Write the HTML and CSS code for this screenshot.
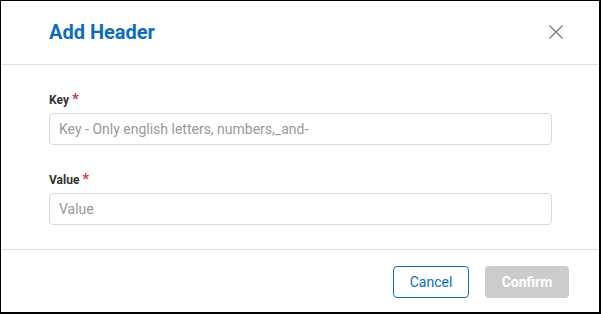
FILE: index.html
```html
<!DOCTYPE html>
<html lang="en">
<head>
    <meta charset="UTF-8">
    <meta name="viewport" content="width=device-width, initial-scale=1.0">
    <title>Add Header</title>
    <link rel="stylesheet" href="styles.css">
</head>
<body>
    <div class="dialog">
        <div class="dialog-header">
            <h1>Add Header</h1>
            <button class="close-btn" aria-label="Close">
                <svg width="14" height="14" viewBox="0 0 14 14">
                    <path d="M0.5 0.5 L13.5 13.5 M13.5 0.5 L0.5 13.5" stroke="#777" stroke-width="1.2" fill="none"/>
                </svg>
            </button>
        </div>

        <div class="dialog-body">
            <div class="form-group">
                <label for="key">Key <span class="required">*</span></label>
                <input type="text" id="key" placeholder="Key - Only english letters, numbers,_and-">
            </div>
            <div class="form-group">
                <label for="value">Value <span class="required">*</span></label>
                <input type="text" id="value" placeholder="Value">
            </div>
        </div>

        <div class="dialog-footer">
            <button class="btn btn-outline">Cancel</button>
            <button class="btn btn-disabled" disabled>Confirm</button>
        </div>
    </div>
</body>
</html>
```

FILE: styles.css
```css
body {
    margin: 0;
    font-family: Roboto, "Liberation Sans", Arial, sans-serif;
    background: white;
}

.dialog {
    width: 601px;
    height: 314px;
    box-sizing: border-box;
    border: 1px solid #000;
    border-right-width: 2px;
    border-bottom-width: 2px;
    background: white;
    display: flex;
    flex-direction: column;
}

.dialog-header {
    flex-shrink: 0;
    height: 63px;
    display: flex;
    align-items: center;
    justify-content: space-between;
    padding: 0 36px 0 48px;
    border-bottom: 1px solid #e0e0e0;
}

.dialog-header h1 {
    margin: 0;
    font-size: 20px;
    font-weight: bold;
    color: #0e6cbd;
    padding-bottom: 2px;
}

.close-btn {
    background: none;
    border: none;
    padding: 0;
    width: 14px;
    height: 14px;
    cursor: pointer;
    display: flex;
    margin-bottom: 1px;
}

.dialog-body {
    flex: 1;
    min-height: 0;
    display: flex;
    flex-direction: column;
    gap: 28px;
    padding: 28px 47px 0 48px;
    border-bottom: 1px solid #e0e0e0;
}

.form-group label {
    display: block;
    font-size: 12px;
    font-weight: bold;
    color: #333;
    margin-bottom: 6px;
    line-height: 14px;
}

.required {
    color: #d6393b;
    font-size: 15px;
    line-height: 12px;
}

.form-group input {
    width: 100%;
    height: 32px;
    box-sizing: border-box;
    border: 1px solid #d9d9d9;
    border-radius: 4px;
    padding: 0 9px;
    font-family: Roboto, "Liberation Sans", Arial, sans-serif;
    font-size: 14px;
    color: #333;
    outline: none;
}

.form-group input::placeholder {
    color: #999;
}

.dialog-footer {
    flex-shrink: 0;
    height: 62px;
    box-sizing: border-box;
    display: flex;
    align-items: flex-start;
    justify-content: flex-end;
    gap: 16px;
    padding: 16px 30px 0 0;
}

.btn {
    height: 32px;
    border-radius: 4px;
    font-family: Roboto, "Liberation Sans", Arial, sans-serif;
    font-size: 14px;
    padding: 0;
}

.btn-outline {
    width: 76px;
    background: white;
    color: #0e6cbd;
    border: 1px solid #0e6cbd;
}

.btn-disabled {
    width: 84px;
    background: #cccccc;
    color: white;
    border: none;
    font-weight: bold;
}
```
